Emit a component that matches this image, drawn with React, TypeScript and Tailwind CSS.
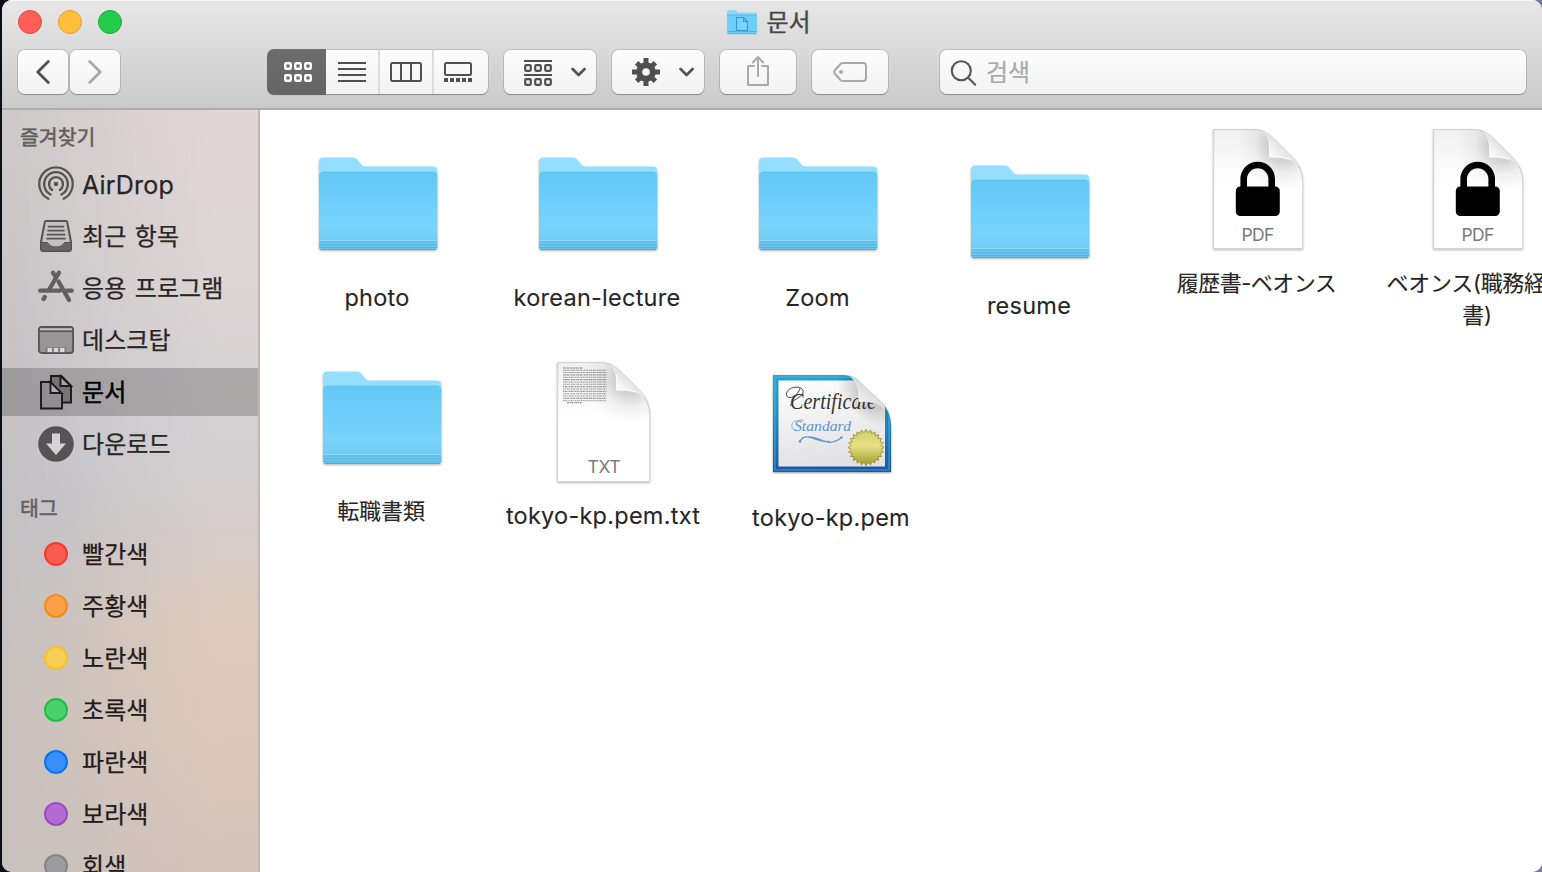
import type { ReactNode } from 'react';

const FONT = "font-['Inter','Noto_Sans_CJK_KR',sans-serif]";
const FONT_JP = "font-['Inter','Noto_Sans_CJK_JP',sans-serif]";

function Folder() {
  return (
    <svg width="124" height="100" viewBox="-2 -1 124 100" className="block">
      <defs>
        <linearGradient id="folderFront" x1="0" y1="0" x2="0" y2="1">
          <stop offset="0" stopColor="#63c8f4" />
          <stop offset="0.2" stopColor="#68cbf6" />
          <stop offset="0.7" stopColor="#79d4fb" />
          <stop offset="0.86" stopColor="#72cdf4" />
          <stop offset="1" stopColor="#68c2ec" />
        </linearGradient>
        <filter id="folderShadow" x="-5%" y="-5%" width="110%" height="115%">
          <feDropShadow dx="0" dy="1" stdDeviation="1" floodColor="#000" floodOpacity="0.3" />
        </filter>
      </defs>
      <g filter="url(#folderShadow)">
        <path d="M0 5Q0 .6 4.500 .6H34Q37 .6 39 3.400L42 7.300Q43.500 9.400 46 9.400H114Q118.300 9.400 118.300 14V90Q118.300 93 115.300 93H3Q0 93 0 90Z" fill="#94deff" />
        <path d="M0 19Q0 14.800 4.500 14.800H114Q118.300 14.800 118.300 19V90Q118.300 93 115.300 93H3Q0 93 0 90Z" fill="url(#folderFront)" />
      </g>
      <path d="M4 15.200H114.500" stroke="#58bce8" strokeOpacity=".5" strokeWidth="1" />
      <path d="M0 83.500H118.300" stroke="#8ad8f8" strokeWidth="1" />
      <path d="M0 85H118.300M0 87.800H118.300M0 90.500H118.300" stroke="#5ab5e0" strokeWidth="1" />
      <path d="M1.500 92.500H117" stroke="#58acd2" strokeWidth="1" />
    </svg>
  );
}

function PageShape({ width, children }: { width: number; children: ReactNode }) {
  const w = width;
  const outline = `M0 0H${w - 46}Q${w - 38} .5 ${w - 32} 6.500L${w - 10} 28Q${w} 38 ${w} 53V119H0Z`;
  return (
    <svg width={w + 6} height="127" viewBox={`-3 -2 ${w + 6} 127`} className="block">
      <defs>
        <linearGradient id="pageFill" x1="0" y1="0" x2="0" y2="1">
          <stop offset="0" stopColor="#f0f0f0" />
          <stop offset="0.3" stopColor="#fbfbfb" />
          <stop offset="0.5" stopColor="#ffffff" />
        </linearGradient>
        <linearGradient id="curl" x1="0" y1="1" x2="0.55" y2="0.42">
          <stop offset="0" stopColor="#ffffff" />
          <stop offset="0.55" stopColor="#f8f8f8" />
          <stop offset="1" stopColor="#e2e2e2" />
        </linearGradient>
        <radialGradient id="curlShade">
          <stop offset="0.3" stopColor="#000" stopOpacity=".16" />
          <stop offset="0.6" stopColor="#000" stopOpacity=".05" />
          <stop offset="1" stopColor="#000" stopOpacity="0" />
        </radialGradient>
        <filter id="pageShadow" x="-6%" y="-4%" width="112%" height="110%">
          <feDropShadow dx="0" dy="1" stdDeviation="1" floodColor="#000" floodOpacity="0.38" />
        </filter>
        <clipPath id={`clip${w}`}>
          <path d={outline} />
        </clipPath>
      </defs>
      <g transform="translate(.7 .6)">
        <path d={outline} fill="url(#pageFill)" stroke="#c4c4c4" strokeWidth=".7" filter="url(#pageShadow)" />
        <g clipPath={`url(#clip${w})`}>
          <ellipse cx={w - 21} cy="18" rx="46" ry="42" transform={`rotate(44 ${w - 21} 18)`} fill="url(#curlShade)" />
        </g>
        <path d={`M${w - 40} 1.500Q${w - 32} 9 ${w - 33} 27.500Q${w - 13} 26 ${w - 3} 38Q${w - 6} 32 ${w - 10} 28L${w - 32} 6.500Q${w - 36} 2.500 ${w - 40} 1.500Z`} fill="url(#curl)" />
        <path d={`M${w - 33.500} 12Q${w - 32.500} 20 ${w - 33} 27.500Q${w - 22} 26.500 ${w - 14} 29.500`} fill="none" stroke="#fff" strokeWidth="1" />
      </g>
      {children}
    </svg>
  );
}

function PdfIcon() {
  return (
    <PageShape width={89}>
      <path d="M31 60V49a14 14 0 0 1 28 0V60" transform="translate(-.3 1)" fill="none" stroke="#000" strokeWidth="6.600" />
      <rect x="22.800" y="57.500" width="44" height="29.500" rx="4.500" fill="#000" />
      <text x="44.900" y="111.500" fontSize="17.500" textAnchor="middle" fill="#7a7a7a" className="font-['Inter',sans-serif]" textLength="33">PDF</text>
    </PageShape>
  );
}

function TxtIcon() {
  return (
    <PageShape width={92}>
      <g stroke="#777" strokeWidth="1.100">
        <path d="M6 6H26" strokeDasharray="2 .7 1 .5" />
        {[0, 1, 2, 3, 4, 5, 6, 7, 8, 9, 10, 11, 12, 13].map((i) => (
          <path key={i} d={`M6 ${8.2 + i * 2.35}H49.500`} strokeDasharray={i % 2 ? '1.3 .6 2 .7 .8 .5' : '.8 .5 1.7 .6 2.2 .7'} strokeOpacity=".8" />
        ))}
        <path d="M10 40.800H25" strokeDasharray="2 .7 1 .5" />
      </g>
      <text x="47" y="111" fontSize="17.500" textAnchor="middle" fill="#7a7a7a" className="font-['Inter',sans-serif]" textLength="33">TXT</text>
    </PageShape>
  );
}

function CertIcon() {
  const pts: string[] = [];
  for (let i = 0; i < 48; i++) {
    const r = i % 2 ? 15 : 18;
    const a = (i * Math.PI) / 24 - Math.PI / 2;
    pts.push(`${(93 + r * Math.cos(a)).toFixed(2)},${(72.5 + r * Math.sin(a)).toFixed(2)}`);
  }
  return (
    <svg width="124" height="104" viewBox="-3 -2 124 104" className="block">
      <defs>
        <linearGradient id="certBorder" x1="0" y1="0" x2="0" y2="1">
          <stop offset="0" stopColor="#27a5cf" />
          <stop offset="0.4" stopColor="#248fc7" />
          <stop offset="1" stopColor="#1a55a6" />
        </linearGradient>
        <linearGradient id="certPaper" x1="0" y1="0" x2=".2" y2="1">
          <stop offset="0" stopColor="#fff" />
          <stop offset="1" stopColor="#e2e2e4" />
        </linearGradient>
        <linearGradient id="certCurl" x1="0" y1="1" x2=".55" y2=".42">
          <stop offset=".1" stopColor="#fff" />
          <stop offset="1" stopColor="#dcdcdc" />
        </linearGradient>
        <linearGradient id="seal" x1="0" y1="0" x2="0" y2="1">
          <stop offset="0" stopColor="#d2ce68" />
          <stop offset=".45" stopColor="#e5e188" />
          <stop offset="1" stopColor="#a39a25" />
        </linearGradient>
        <radialGradient id="certShade">
          <stop offset="0.3" stopColor="#000" stopOpacity=".2" />
          <stop offset="1" stopColor="#000" stopOpacity="0" />
        </radialGradient>
        <filter id="certShadow" x="-5%" y="-5%" width="110%" height="112%">
          <feDropShadow dx="0" dy="1" stdDeviation="1" floodColor="#000" floodOpacity="0.4" />
        </filter>
        <clipPath id="certClip">
          <path d="M0 0H70Q80 0 87 7L109 28Q118 37 118 51V97H0Z" />
        </clipPath>
      </defs>
      <g filter="url(#certShadow)">
        <path d="M0 0H70Q80 0 87 7L109 28Q118 37 118 51V97H0Z" fill="url(#certBorder)" />
      </g>
      <g clipPath="url(#certClip)">
        <rect x="2" y="2" width="114" height="93" fill="none" stroke="#5bc1e4" strokeOpacity=".45" strokeWidth="1.500" />
        <rect x="5.500" y="5.500" width="106.500" height="86" fill="url(#certPaper)" />
        <ellipse cx="97" cy="18" rx="40" ry="26" transform="rotate(44 97 18)" fill="url(#certShade)" />
      </g>
      <path d="M30 18C32 9 13 11 13.500 19.500C14 26 25 21 27 13.500M30 18C27 24 19 24 17.500 31" fill="none" stroke="#333" strokeWidth=".9" />
      <text x="17" y="34" fontSize="23" fontStyle="italic" fill="#333" textLength="86" lengthAdjust="spacingAndGlyphs" className="font-['Liberation_Serif',serif]">Certificate</text>
      <path d="M76 1Q86 7 85.500 27Q104 25.500 113 35.500Q111 30.500 109 28L87 7Q82 2 76 1Z" fill="url(#certCurl)" />
      <path d="M25 46C18 44 16 55 24 56M31 46Q28 43 25 46" fill="none" stroke="#6a9fd4" strokeWidth=".8" />
      <text x="21" y="56" fontSize="15" fontStyle="italic" fill="#5b94cd" textLength="57" lengthAdjust="spacingAndGlyphs" className="font-['Liberation_Serif',serif]">Standard</text>
      <path d="M27 66C34 55 46 70 56 66M35 62C46 60 53 74 68 63" fill="none" stroke="#5f99d2" strokeWidth="1.300" />
      <circle cx="27" cy="66.500" r="1.200" fill="#5590cc" />
      <circle cx="68.500" cy="62.500" r="1.200" fill="#5590cc" />
      <polygon points={pts.join(' ')} fill="url(#seal)" stroke="#98903a" strokeWidth=".9" />
    </svg>
  );
}

type Item = { pos: string; label: string; labelClass: string; icon: ReactNode };

const LATIN = 'text-[23.500px] tracking-[0.25px]';
const CJK = 'text-[22px]';

const items: Item[] = [
  { pos: 'left-[57px] top-[46px]', label: 'photo', labelClass: `mt-[26px] ml-[-4px] ${LATIN}`, icon: <Folder /> },
  { pos: 'left-[277px] top-[46px]', label: 'korean-lecture', labelClass: `mt-[26px] ml-[-4px] ${LATIN}`, icon: <Folder /> },
  { pos: 'left-[497px] top-[46px]', label: 'Zoom', labelClass: `mt-[26px] ml-[-3px] ${LATIN}`, icon: <Folder /> },
  { pos: 'left-[709px] top-[54px]', label: 'resume', labelClass: `mt-[26px] ml-[-4px] ${LATIN}`, icon: <Folder /> },
  { pos: 'left-[950px] top-[17px]', label: '履歴書-ベオンス', labelClass: `mt-[13px] ml-[-2px] ${CJK} tracking-[-0.5px]`, icon: <PdfIcon /> },
  { pos: 'left-[1170px] top-[17px]', label: 'ベオンス(職務経歴\n書)', labelClass: `mt-[13px] ml-[-1px] ${CJK} tracking-[-0.3px]`, icon: <PdfIcon /> },
  { pos: 'left-[61px] top-[260px]', label: '転職書類', labelClass: `mt-[25px] ml-[-4px] ${CJK} tracking-[-0.1px]`, icon: <Folder /> },
  { pos: 'left-[294px] top-[250px]', label: 'tokyo-kp.pem.txt', labelClass: `mt-[13px] ml-0 ${LATIN}`, icon: <TxtIcon /> },
  { pos: 'left-[510px] top-[263px]', label: 'tokyo-kp.pem', labelClass: `mt-[25px] ml-[-2px] ${LATIN}`, icon: <CertIcon /> },
];

function FileItem({ item }: { item: Item }) {
  return (
    <div className={`absolute flex flex-col items-center ${item.pos}`}>
      {item.icon}
      <div className={`flex w-0 justify-center ${item.labelClass}`}>
        <span className={`shrink-0 whitespace-pre text-center leading-8 text-[#262626] [-webkit-text-stroke:0.1px_#262626] ${FONT_JP}`}>{item.label}</span>
      </div>
    </div>
  );
}

function AirDropIcon() {
  return (
    <svg width="36" height="36" viewBox="0 0 36 36" fill="none" stroke="#575353" strokeWidth="2.300" strokeLinecap="round">
      <path d="M10.300 32.800A16.700 16.700 0 1 1 25.700 32.800" />
      <path d="M12.600 28.500A11.800 11.800 0 1 1 23.400 28.500" />
      <path d="M14.200 24A7 7 0 1 1 21.800 24" />
      <circle cx="18" cy="18" r="2.300" fill="#575353" stroke="none" />
    </svg>
  );
}

function RecentsIcon() {
  return (
    <svg width="36" height="36" viewBox="0 0 36 36">
      <path d="M8 3H28Q29 3 29.200 4L33 24V31Q33 33 31 33H5Q3 33 3 31V24L6.800 4Q7 3 8 3Z" fill="#c6c2c3" stroke="#575353" strokeWidth="2" strokeLinejoin="round" />
      <path d="M3 24.500H9.500Q12 29 18 29Q24 29 26.500 24.500H33V31Q33 33 31 33H5Q3 33 3 31Z" fill="#686465" stroke="#575353" strokeWidth="1" />
      <path d="M9.800 8.700H26.200M9.300 12.700H26.700M8.800 16.700H27.200M8.300 20.700H27.700" stroke="#5b5758" strokeWidth="1.700" />
    </svg>
  );
}

function AppsIcon() {
  return (
    <svg width="36" height="36" viewBox="0 0 36 36" fill="none" stroke="#625f60" strokeLinecap="round" strokeWidth="4.300">
      <path d="M2.200 20.700H22" />
      <path d="M28.500 20.700H33.800" />
      <path d="M21 2.700L11.200 19.500" />
      <path d="M15 2.700L17 6" />
      <path d="M20.500 11.500L31 30" />
      <path d="M6.800 27L5.500 29" />
    </svg>
  );
}

function DesktopIcon() {
  return (
    <svg width="36" height="36" viewBox="0 0 36 36">
      <rect x=".9" y="5" width="34.200" height="26" rx="3" fill="#999596" stroke="#575353" strokeWidth="1.800" />
      <path d="M2 6.500H34V8.300H2Z" fill="#c4c0c1" />
      <path d="M1 9.200H35" stroke="#575353" strokeWidth="1.500" />
      <rect x="8" y="25.500" width="20" height="5" fill="#7b7778" />
      <path d="M9.500 26H14V30H9.500ZM15.800 26H20.200V30H15.800ZM22 26H26.500V30H22Z" fill="#dddada" />
    </svg>
  );
}

function DocumentsIcon() {
  return (
    <svg width="36" height="36" viewBox="0 0 36 36" stroke="#1c1a1b" strokeWidth="1.900">
      <path d="M13 2H23.500L33 12V28.500H13Z" fill="#777274" />
      <path d="M22.500 2V12H33Z" fill="#aaa4a6" />
      <path d="M3 8H12L24 20V34.500H3Z" fill="#918e91" />
      <path d="M12.500 8V19H23.500Z" fill="#b2adaf" />
    </svg>
  );
}

function DownloadsIcon() {
  return (
    <svg width="36" height="36" viewBox="0 0 36 36">
      <circle cx="18" cy="18" r="17.800" fill="#555354" />
      <path d="M14 7.500H22V17.500H28L18 29L8 17.500H14Z" fill="#d4d2d4" />
    </svg>
  );
}

const places: { label: string; icon: ReactNode; active?: boolean }[] = [
  { label: 'AirDrop', icon: <AirDropIcon /> },
  { label: '최근 항목', icon: <RecentsIcon /> },
  { label: '응용 프로그램', icon: <AppsIcon /> },
  { label: '데스크탑', icon: <DesktopIcon /> },
  { label: '문서', icon: <DocumentsIcon />, active: true },
  { label: '다운로드', icon: <DownloadsIcon /> },
];

const tags = [
  { label: '빨간색', color: 'bg-[#fb5b51] border-[#fa3830]' },
  { label: '주황색', color: 'bg-[#f9a146] border-[#f78a1d]' },
  { label: '노란색', color: 'bg-[#f8ce55] border-[#f6c22b]' },
  { label: '초록색', color: 'bg-[#48d16c] border-[#1bc146]' },
  { label: '파란색', color: 'bg-[#378ff9] border-[#0c70f0]' },
  { label: '보라색', color: 'bg-[#b36bd3] border-[#9d4bc3]' },
  { label: '회색', color: 'bg-[#9b9b9d] border-[#848487]' },
];

const BTN = 'flex h-11 shrink-0 items-center rounded-[7px] bg-linear-to-b from-[#fdfdfd] to-[#f2f2f2] shadow-[0_0_0_1px_rgba(0,0,0,0.11),0_1px_1px_0px_rgba(0,0,0,0.25)]';

function Chevron() {
  return (
    <svg width="16" height="10" viewBox="0 0 16 10" fill="none" stroke="#555" strokeWidth="2.700" strokeLinecap="round" strokeLinejoin="round">
      <path d="M1.600 2L7.600 8L13.600 2" />
    </svg>
  );
}

function Dots({ y }: { y: number }) {
  return (
    <>
      {[1.2, 11.2, 21.2].map((x) => (
        <rect key={x} x={x} y={y} width="5.600" height="5.600" rx="1" />
      ))}
    </>
  );
}

function Toolbar() {
  return (
    <div className="flex h-11 items-center pl-4 pr-4">
      <div className={`${BTN} w-[50px] justify-center`}>
        <svg width="14" height="24" viewBox="0 0 14 24" fill="none" stroke="#505050" strokeWidth="2.800" strokeLinecap="round" strokeLinejoin="round"><path d="M12.300 1.500L1.800 12L12.300 22.500" /></svg>
      </div>
      <div className={`${BTN} ml-0.5 w-[50px] justify-center`}>
        <svg width="14" height="24" viewBox="0 0 14 24" fill="none" stroke="#a9a9a9" strokeWidth="2.800" strokeLinecap="round" strokeLinejoin="round"><path d="M1.700 1.500L12.200 12L1.700 22.500" /></svg>
      </div>
      <div className={`${BTN} ml-[148px] w-[220px]`}>
        <div className="-ml-px flex h-[46px] w-[59px] shrink-0 items-center justify-center rounded-l-[7px] bg-linear-to-b from-[#6c6c6c] to-[#656565] pl-0.5">
          <svg width="28" height="20" viewBox="0 0 28 20" fill="none" stroke="#fff" strokeWidth="2.400"><Dots y={1.2} /><Dots y={13.2} /></svg>
        </div>
        <div className="flex h-full w-[54px] items-center justify-center border-r-2 border-[#dcdcdc]">
          <svg width="28" height="20" viewBox="0 0 28 20" stroke="#505050" strokeWidth="2"><path d="M0 1H28M0 7H28M0 13H28M0 19H28" /></svg>
        </div>
        <div className="flex h-full w-[54px] items-center justify-center border-r-2 border-[#dcdcdc]">
          <svg width="32" height="20" viewBox="0 0 32 20" fill="none" stroke="#505050" strokeWidth="2"><rect x="1" y="1" width="30" height="18" rx="1.500" /><path d="M11 1V19M21 1V19" /></svg>
        </div>
        <div className="flex h-full flex-1 items-center justify-center pr-[6px]">
          <svg width="28" height="20" viewBox="0 0 28 20" fill="none" stroke="#505050" strokeWidth="2"><rect x="1" y="1" width="26" height="12" rx="1.500" /><path d="M0 18H28" strokeWidth="4" strokeDasharray="4 2" /></svg>
        </div>
      </div>
      <div className={`${BTN} ml-4 w-[92px] justify-between pl-5 pr-[9px]`}>
        <svg width="28" height="26" viewBox="0 0 28 26" fill="none" stroke="#505050" strokeWidth="2.200" className="mt-0.5"><path d="M0 1H28M0 15H28" strokeWidth="2" /><Dots y={5.2} /><Dots y={19.2} /></svg>
        <Chevron />
      </div>
      <div className={`${BTN} ml-4 w-[92px] justify-between pl-5 pr-[9px]`}>
        <svg width="28" height="28" viewBox="-14 -14 28 28">
          <g stroke="#505050" strokeWidth="5">
            {[0, 45, 90, 135].map((a) => (
              <path key={a} d={a % 90 ? 'M0 -13.200V-6M0 6V13.200' : 'M0 -14V-6M0 6V14'} transform={`rotate(${a})`} />
            ))}
          </g>
          <circle r="6.800" fill="none" stroke="#505050" strokeWidth="6" />
        </svg>
        <Chevron />
      </div>
      <div className={`${BTN} ml-4 w-[76px] justify-center`}>
        <svg width="24" height="32" viewBox="0 0 24 32" fill="none" stroke="#a9a9a9" strokeWidth="2" strokeLinecap="round" strokeLinejoin="round" className="mt-[-2px]"><path d="M8 11H2.500Q2 11 2 11.500V29.500Q2 30 2.500 30H21.500Q22 30 22 29.500V11.500Q22 11 21.500 11H16" /><path d="M12 21V2M6.800 7.500L12 2L17.200 7.500" /></svg>
      </div>
      <div className={`${BTN} ml-4 w-[76px] justify-center`}>
        <svg width="34" height="20" viewBox="0 0 34 20" fill="none" stroke="#a9a9a9" strokeWidth="2"><path d="M10 1H30Q33 1 33 4V16Q33 19 30 19H10Q8.500 19 7.500 18L1.700 11.500Q.5 10 1.700 8.500L7.500 2Q8.500 1 10 1Z" /><circle cx="8" cy="10" r="2" fill="#a9a9a9" stroke="none" /></svg>
      </div>
      <div className={`${BTN} ml-[52px] w-[586px] pl-2.5`}>
        <svg width="27" height="27" viewBox="0 0 27 27" fill="none" stroke="#555" strokeWidth="2.100" strokeLinecap="round" className="mt-[3px]"><circle cx="11.300" cy="10.800" r="9.500" /><path d="M18 17.500L25.200 24.800" /></svg>
        <span className="ml-[9px] mt-[1px] text-[24px] leading-8 text-[#aaa] [-webkit-text-stroke:0.2px_#aaa]">검색</span>
      </div>
    </div>
  );
}

export default function App() {
  return (
    <div className={`h-[872px] w-[1542px] overflow-hidden bg-linear-to-r from-[#0b0f17] from-50% to-[#777b9b] to-50% pl-0.5 ${FONT}`}>
      <div className="flex h-full flex-col overflow-hidden rounded-[10px] bg-white">
        <header className="h-[110px] shrink-0 border-b-2 border-[#adadad] bg-linear-to-b from-[#e7e7e7] to-[#cacaca] shadow-[inset_0_1px_0_#f6f6f6]">
          <div className="grid h-[50px] grid-cols-3 pr-1.5">
            <div className="flex gap-4 pl-4 pt-2.5">
              <span className="size-6 rounded-full border border-[#e2463f] bg-[#ff5f57]" />
              <span className="size-6 rounded-full border border-[#dfa033] bg-[#ffbf3c]" />
              <span className="size-6 rounded-full border border-[#16ad39] bg-[#25cc4b]" />
            </div>
            <div className="flex h-[44px] items-center justify-center gap-[9px] pt-px">
              <svg width="30" height="26" viewBox="0 0 30 26" className="mb-[2px]">
                <path d="M0 3Q0 1 2 1H9L11 3.500H28Q30 3.500 30 5.500V24Q30 25 29 25H1Q0 25 0 24Z" fill="#8bd9fb" />
                <path d="M0 6H30V24Q30 25 29 25H1Q0 25 0 24Z" fill="#6fcef8" />
                <path d="M0 6H30M0 22.500H30M1 24.800H29" stroke="#4eafdc" strokeWidth=".8" />
                <path d="M9.500 8.500H16.500L20.500 12.500V21.500H9.500ZM16.500 8.500V12.500H20.500" fill="#7cd3f9" stroke="#2e9bd0" strokeWidth="1.100" />
              </svg>
              <span className="text-[24px] leading-8 text-[#484848] [-webkit-text-stroke:0.4px_#484848]">문서</span>
            </div>
          </div>
          <Toolbar />
        </header>
        <div className="flex min-h-0 flex-1">
          <aside className="grid w-[258px] shrink-0 grid-cols-1 grid-rows-1 overflow-hidden border-r-2 border-[#c1b6b3] bg-[linear-gradient(180deg,#cdcac9_0%,#c5c3c6_38%,#c2c1c5_52%,#c8c1bf_75%,#c8c2be_100%)]">
            <div className="col-start-1 row-start-1 bg-[linear-gradient(180deg,#e2d6d6_0%,#ddd5d6_20%,#d4d1d3_44%,#d5ccca_55%,#dccabc_68%,#dbc8bb_80%,#d3c3bb_100%)] [mask-image:linear-gradient(90deg,transparent_2%,#000000a0_48%,#000_85%)]" />
            <div className="z-10 col-start-1 row-start-1 h-0">
              <div className="flex h-[50px] items-center pl-[18px] pt-[7px] text-[20.500px] text-[#635d5d] [-webkit-text-stroke:0.5px_#635d5d]">즐겨찾기</div>
              <ul className="flex flex-col gap-1">
                {places.map((p) => (
                  <li key={p.label} className={`flex h-12 items-center gap-2 pl-9 text-[24px] ${p.active ? 'bg-black/20 text-black [-webkit-text-stroke:0.5px_#000]' : 'text-[#2a2425] [-webkit-text-stroke:0.25px_#2a2425]'}`}>
                    <span className="shrink-0">{p.icon}</span>
                    <span className={`mt-[1px] whitespace-nowrap leading-8 tracking-[0.1px] [word-spacing:1.500px] ${p.label === 'AirDrop' ? 'text-[25px] tracking-[0.2px]' : ''}`}>{p.label}</span>
                  </li>
                ))}
              </ul>
              <div className="flex h-[62px] items-end pl-[18px] pb-[5px] text-[20.500px] text-[#635e5f] [-webkit-text-stroke:0.5px_#635e5f]">태그</div>
              <ul className="flex flex-col gap-1">
                {tags.map((t) => (
                  <li key={t.label} className="flex h-12 shrink-0 items-center gap-3.5 pl-[42px] text-[24px] text-[#241917] [-webkit-text-stroke:0.25px_#241917]">
                    <span className={`size-6 shrink-0 rounded-full border-2 ${t.color}`} />
                    <span className="mt-[1px] whitespace-nowrap leading-8 tracking-[0.1px]">{t.label}</span>
                  </li>
                ))}
              </ul>
            </div>
          </aside>
          <main className="relative flex-1 overflow-hidden bg-white">
            {items.map((item) => (
              <FileItem key={item.label} item={item} />
            ))}
          </main>
        </div>
      </div>
    </div>
  );
}
